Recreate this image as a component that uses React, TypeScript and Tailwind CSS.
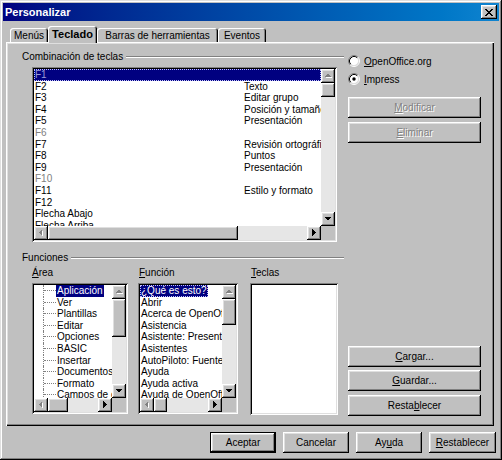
import React from 'react';

const raised = 'shadow-[inset_-1px_-1px_0_#000,inset_1px_1px_0_#fff,inset_-2px_-2px_0_#808080,inset_2px_2px_0_#dfdfdf]';
const sunken = 'shadow-[inset_1px_1px_0_#808080,inset_-1px_-1px_0_#fff,inset_2px_2px_0_#000,inset_-2px_-2px_0_#dfdfdf]';

type Dir = 'up' | 'down' | 'left' | 'right';

const TRIANGLES: Record<Dir, string> = {
    up: '0,5 7,5 3.5,1.5',
    down: '0,2 7,2 3.5,5.5',
    left: '5,0 5,7 1.5,3.5',
    right: '2,0 2,7 5.5,3.5',
};

const Arrow: React.FC<{ dir: Dir; disabled?: boolean }> = ({ dir, disabled }) => (
    <div className={`w-[14px] h-[14px] shrink-0 bg-[#c0c0c0] flex items-center justify-center ${raised}`}>
        <svg width="8" height="8" viewBox="0 0 8 8" shapeRendering="crispEdges">
            {disabled && <polygon points={TRIANGLES[dir]} fill="#fff" transform="translate(1 1)" />}
            <polygon points={TRIANGLES[dir]} fill={disabled ? '#808080' : '#000'} />
        </svg>
    </div>
);

const Underline: React.FC<{ children: React.ReactNode }> = ({ children }) => <span className="underline underline-offset-1">{children}</span>;

interface ScrollListProps {
    className: string;
    vThumb: string;
    hThumb: string;
    children: React.ReactNode;
}

// lista con barras de desplazamiento estilo Win98
const ScrollList: React.FC<ScrollListProps> = ({ className, vThumb, hThumb, children }) => (
    <div className={`bg-white p-[2px] ${sunken} ${className}`}>
        <div className="flex h-full">
            <div className="flex flex-col flex-1 min-w-0">
                <div className="flex-1 overflow-hidden">{children}</div>
                <div className="flex h-[14px]">
                    <Arrow dir="left" disabled />
                    <div className={`h-[14px] bg-[#c0c0c0] ${raised} ${hThumb}`} />
                    <div className="flex-1 bg-[#e6e6e6]" />
                    <Arrow dir="right" />
                </div>
            </div>
            <div className="flex flex-col w-[14px]">
                <Arrow dir="up" disabled />
                <div className={`w-[14px] bg-[#c0c0c0] ${raised} ${vThumb}`} />
                <div className="flex-1 bg-[#e6e6e6]" />
                <Arrow dir="down" />
                <div className="h-[14px] bg-[#c0c0c0]" />
            </div>
        </div>
    </div>
);

const Button: React.FC<{ children: React.ReactNode; className?: string; disabled?: boolean; isDefault?: boolean }> = ({ children, className = '', disabled, isDefault }) => (
    <div className={`h-[21px] ${isDefault ? 'border border-black' : ''} ${className}`}>
        <div className={`h-full bg-[#c0c0c0] flex items-center justify-center ${raised} ${disabled ? 'text-[#808080] [text-shadow:1px_1px_0_#fff]' : 'text-black'}`}>
            {children}
        </div>
    </div>
);

const Radio: React.FC<{ checked?: boolean; children: React.ReactNode; className?: string }> = ({ checked, children, className = '' }) => (
    <div className={`flex items-center h-[12px] ${className}`}>
        <svg width="12" height="12" viewBox="0 0 12 12" className="shrink-0">
            <circle cx="6" cy="6" r="4.5" fill="#fff" />
            <path d="M2.11,9.89 A5.5,5.5 0 0 1 9.89,2.11" fill="none" stroke="#808080" />
            <path d="M9.89,2.11 A5.5,5.5 0 0 1 2.11,9.89" fill="none" stroke="#fff" />
            <path d="M2.82,9.18 A4.5,4.5 0 0 1 9.18,2.82" fill="none" stroke="#000" />
            <path d="M9.18,2.82 A4.5,4.5 0 0 1 2.82,9.18" fill="none" stroke="#dfdfdf" />
            {checked && <circle cx="6" cy="6" r="1.7" fill="#000" />}
        </svg>
        <span className="ml-[4px]">{children}</span>
    </div>
);

const GroupLabel: React.FC<{ children: React.ReactNode; className?: string }> = ({ children, className = '' }) => (
    <div className={`flex items-center h-[12px] gap-[3px] ${className}`}>
        <span className="leading-[12px]">{children}</span>
        <div className="flex-1 h-[2px] border-t border-[#808080] border-b border-b-white" />
    </div>
);

const SHORTCUTS: { key: string; fn?: string; grey?: boolean }[] = [
    { key: 'F1' },
    { key: 'F2', fn: 'Texto' },
    { key: 'F3', fn: 'Editar grupo' },
    { key: 'F4', fn: 'Posición y tamaño' },
    { key: 'F5', fn: 'Presentación' },
    { key: 'F6', grey: true },
    { key: 'F7', fn: 'Revisión ortográfica' },
    { key: 'F8', fn: 'Puntos' },
    { key: 'F9', fn: 'Presentación' },
    { key: 'F10', grey: true },
    { key: 'F11', fn: 'Estilo y formato' },
    { key: 'F12' },
    { key: 'Flecha Abajo' },
    { key: 'Flecha Arriba' },
];

const AREAS = ['Aplicación', 'Ver', 'Plantillas', 'Editar', 'Opciones', 'BASIC', 'Insertar', 'Documentos', 'Formato', 'Campos de control'];

const FUNCTIONS = [
    '¿Qué es esto?',
    'Abrir',
    'Acerca de OpenOffice.org',
    'Asistencia',
    'Asistente: Presentación',
    'Asistentes',
    'AutoPiloto: Fuente de datos',
    'Ayuda',
    'Ayuda activa',
    'Ayuda de OpenOffice.org',
];

const TABS = [
    { label: 'Menús', width: 'w-[38px]' },
    { label: 'Teclado', width: 'w-[49px]', active: true },
    { label: 'Barras de herramientas', width: 'w-[121px]' },
    { label: 'Eventos', width: 'w-[48px]' },
];

const App: React.FC = () => {
    return (
        <div className="w-[502px] h-[460px] bg-[#c0c0c0] p-[3px] flex flex-col text-[10px] text-black font-['Liberation_Sans',Arial,sans-serif] shadow-[inset_-1px_-1px_0_#000,inset_1px_1px_0_#dfdfdf,inset_-2px_-2px_0_#808080,inset_2px_2px_0_#fff] select-none">
            <header className="h-[18px] shrink-0 flex items-center bg-linear-to-r from-[#000080] to-[#1084d0] pl-[2px] pr-[2px]">
                <span className="text-white font-bold text-[11px] leading-[18px]">Personalizar</span>
                <div className={`ml-auto w-[16px] h-[14px] bg-[#c0c0c0] flex items-center justify-center ${raised}`}>
                    <svg width="8" height="7" viewBox="0 0 8 7" shapeRendering="crispEdges">
                        <path d="M0,0h2v1h-2zM6,0h2v1h-2zM1,1h2v1h-2zM5,1h2v1h-2zM2,2h4v1h-4zM3,3h2v1h-2zM2,4h4v1h-4zM1,5h2v1h-2zM5,5h2v1h-2zM0,6h2v1h-2zM6,6h2v1h-2z" fill="#000" />
                    </svg>
                </div>
            </header>

            <div className="flex items-end h-[17px] mt-[5px] -mb-[1px] pl-[7px] shrink-0">
                {TABS.map(tab => (
                    <div
                        key={tab.label}
                        className={`${tab.width} rounded-t-[3px] bg-[#c0c0c0] flex items-center justify-center shadow-[inset_1px_1px_0_#fff,inset_-1px_0_0_#000,inset_-2px_0_0_#808080] ${tab.active ? 'h-[17px] relative z-10 font-bold text-[11px] pb-[1px]' : 'h-[14px] mb-[1px]'}`}
                    >
                        {tab.label}
                    </div>
                ))}
            </div>

            <main className={`ml-[3px] w-[488px] h-[384px] shrink-0 flex pl-[16px] shadow-[inset_1px_1px_0_#fff,inset_-1px_-1px_0_#000,inset_-2px_-2px_0_#808080,inset_2px_2px_0_#dfdfdf]`}>
                <section className="w-[322px] pt-[9px] flex flex-col">
                    <GroupLabel>Combinación de teclas</GroupLabel>
                    <div className="pl-[10px] mt-[4px]">
                        <ScrollList className="w-[305px] h-[175px]" vThumb="h-[14px]" hThumb="w-[190px]">
                            {SHORTCUTS.map((row, i) => (
                                <div
                                    key={row.key}
                                    className={`flex h-[11.6px] leading-[11.6px] whitespace-nowrap ${i === 0 ? 'bg-[#000080] text-[#9a9ad6] outline outline-1 -outline-offset-1 outline-dotted outline-[#c0c0ff]' : ''} ${row.grey ? 'text-[#808080]' : ''}`}
                                >
                                    <span className="w-[210px] shrink-0 pl-[1px]">{row.key}</span>
                                    <span>{row.fn}</span>
                                </div>
                            ))}
                        </ScrollList>
                    </div>

                    <GroupLabel className="mt-[10px]">Funciones</GroupLabel>

                    <div className="pl-[10px] mt-[3px] flex">
                        <div className="flex flex-col w-[96px]">
                            <span className="h-[12px] leading-[12px]"><Underline>Á</Underline>rea</span>
                            <ScrollList className="mt-[4px] w-[96px] h-[131px]" vThumb="h-[38px]" hThumb="w-[20px]">
                                {AREAS.map((area, i) => (
                                    <div key={area} className="flex h-[11.6px] leading-[11.6px] whitespace-nowrap">
                                        <div className="ml-[9px] w-[13px] h-full shrink-0 border-l border-dotted border-[#808080] flex flex-col">
                                            <div className="h-[6px] border-b border-dotted border-[#808080]" />
                                        </div>
                                        <span className={`px-[1px] ${i === 0 ? 'bg-[#000080] text-white' : ''}`}>{area}</span>
                                    </div>
                                ))}
                            </ScrollList>
                        </div>

                        <div className="flex flex-col w-[100px] ml-[10px]">
                            <span className="h-[12px] leading-[12px] pl-[1px]"><Underline>F</Underline>unción</span>
                            <ScrollList className="mt-[4px] w-[100px] h-[131px]" vThumb="h-[26px]" hThumb="w-[13px]">
                                {FUNCTIONS.map((fn, i) => (
                                    <div key={fn} className="h-[11.6px] leading-[11.6px] whitespace-nowrap">
                                        <span className={`px-[1px] inline-block h-[11.6px] ${i === 0 ? 'bg-[#000080] text-white outline outline-1 -outline-offset-1 outline-dotted outline-[#c0c0ff]' : ''}`}>{fn}</span>
                                    </div>
                                ))}
                            </ScrollList>
                        </div>

                        <div className="flex flex-col w-[88px] ml-[12px]">
                            <span className="h-[12px] leading-[12px] pl-[1px]"><Underline>T</Underline>eclas</span>
                            <div className={`mt-[4px] w-[88px] h-[132px] bg-white ${sunken}`} />
                        </div>
                    </div>
                </section>

                <aside className="ml-[4px] w-[133px] pt-[13px] pb-[10px] flex flex-col">
                    <Radio><Underline>O</Underline>penOffice.org</Radio>
                    <Radio checked className="mt-[6px]"><Underline>I</Underline>mpress</Radio>
                    <Button disabled className="mt-[12px]"><Underline>M</Underline>odificar</Button>
                    <Button disabled className="mt-[4px]"><Underline>E</Underline>liminar</Button>

                    <Button className="mt-auto"><Underline>C</Underline>argar...</Button>
                    <Button className="mt-[3px]"><Underline>G</Underline>uardar...</Button>
                    <Button className="mt-[4px]">Resta<Underline>b</Underline>lecer</Button>
                </aside>
            </main>

            <footer className="flex justify-end gap-[7px] mt-[6px] pr-[3px]">
                <Button isDefault className="w-[66px]">Aceptar</Button>
                <Button className="w-[66px]">Cancelar</Button>
                <Button className="w-[66px]">Ay<Underline>u</Underline>da</Button>
                <Button className="w-[67px]"><Underline>R</Underline>establecer</Button>
            </footer>
        </div>
    );
};

export default App;
